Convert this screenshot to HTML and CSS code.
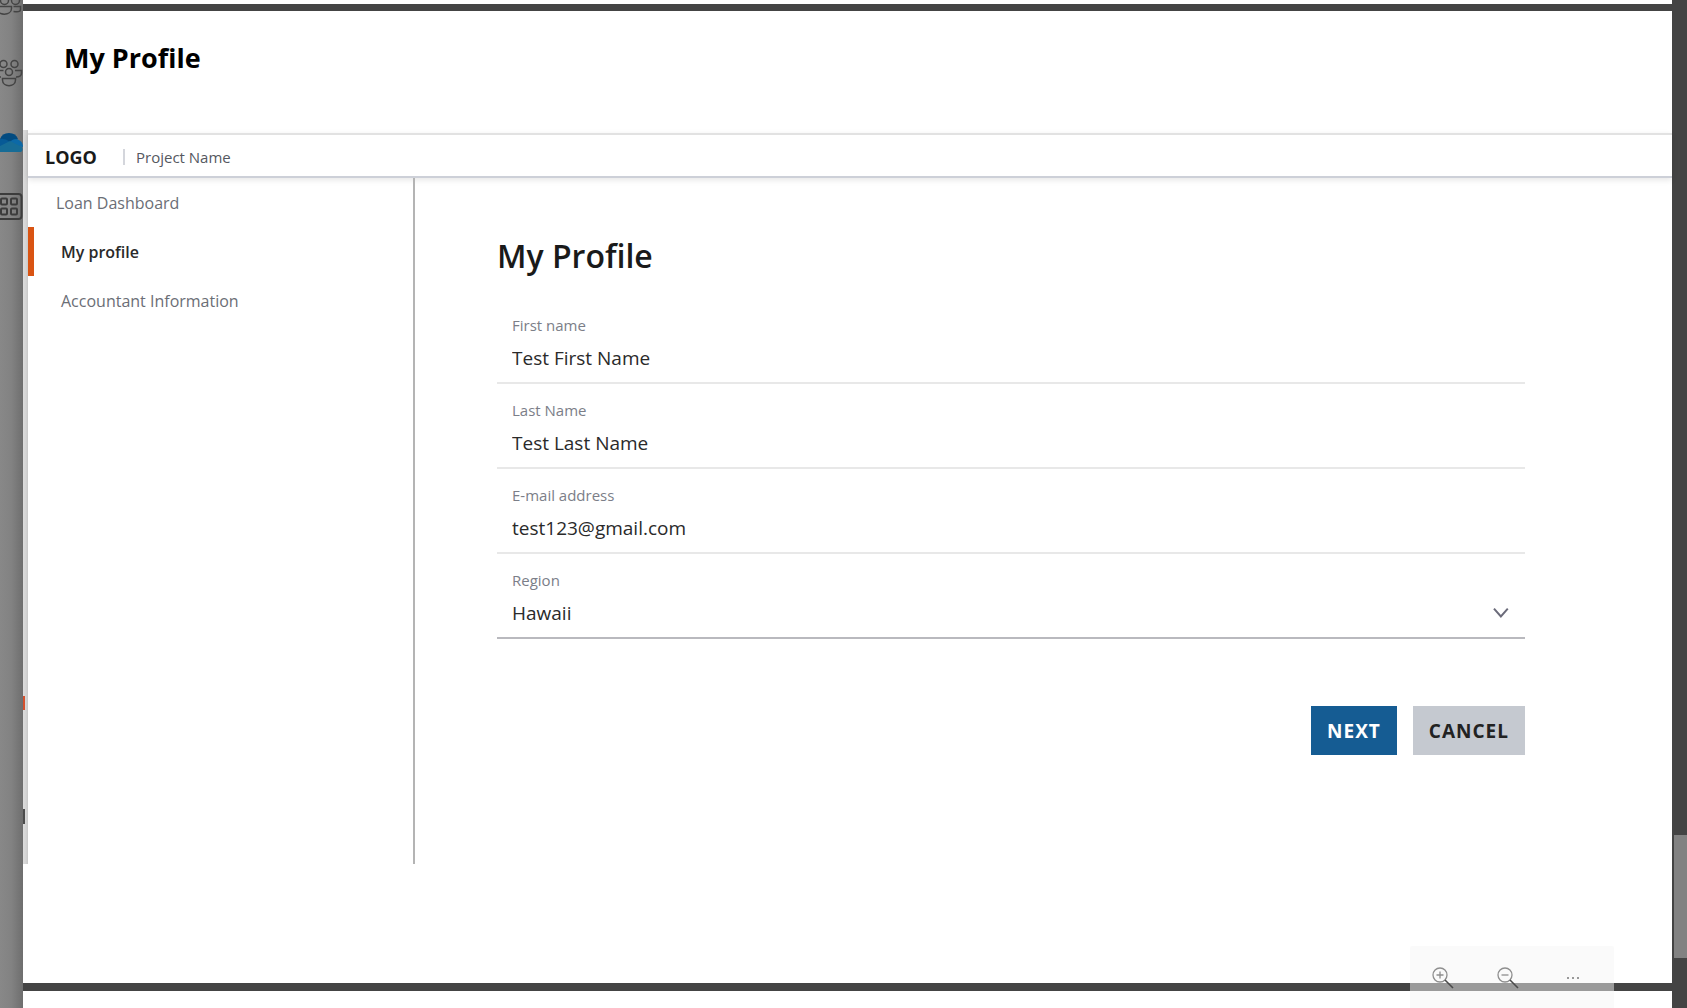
FILE: index.html
```html
<!DOCTYPE html>
<html lang="en">
<head>
<meta charset="utf-8">
<title>My Profile</title>
<link rel="stylesheet" href="styles.css">
</head>
<body>
<div class="app">
  <nav class="rail" aria-label="Apps">
    <ul class="rail-list">
      <li><a href="#" aria-label="Communities"><svg class="rail-icon" viewBox="0 0 23 40"><g class="people"><circle cx="4.500" cy="12.500" r="4"/><circle cx="15.500" cy="12.500" r="4"/><path d="M-3 18.500H11.500V20.500C11.500 28-3 28-3 20.500ZM13.500 18.500H20.500V21.500C20.500 24 17.500 24 13.500 23.500"/></g></svg></a></li>
      <li><a href="#" aria-label="People"><svg class="rail-icon" viewBox="0 0 23 40"><g class="people"><circle cx="3.500" cy="10" r="3.500"/><circle cx="14.500" cy="10" r="3.500"/><circle cx="9" cy="18" r="3.500"/><path d="M2.500 24.500H15.500V26C15.500 33.500 2.500 33.500 2.500 26ZM15 16.500H21.500V19C21.500 22 19 23 16 23M0 16.500H3.500M0 23H1"/></g></svg></a></li>
      <li><a href="#" aria-label="Cloud storage"><svg class="rail-icon" viewBox="0 0 23 40"><path fill="#034b80" d="M0 19Q2 13 9 13T18 19L9 24 0 26Z"/><path fill="#075a96" d="M0 19Q5 18 10 22L0 29Z"/><path fill="#0c69a7" d="M9 23Q14 17 19 20Q23 22 23 27L16 26Z"/><path fill="#176c96" d="M0 26L10 21 22 27Q24 32 19 32H0Z"/></svg></a></li>
      <li><a href="#" aria-label="All apps"><svg class="rail-icon" viewBox="0 0 23 40"><g class="tiles"><rect x="-5" y="8" width="26.500" height="25" rx="3"/><rect x="1" y="12.500" width="6" height="6" rx="1"/><rect x="11" y="12.500" width="6" height="6" rx="1"/><rect x="1" y="22.500" width="6" height="6" rx="1"/><rect x="11" y="22.500" width="6" height="6" rx="1"/></g></svg></a></li>
    </ul>
  </nav>

  <div class="viewer">
    <div class="sheet sheet-previous"></div>
    <article class="sheet sheet-current">
      <h1 class="sheet-title">My Profile</h1>
      <div class="mockup">
        <div class="mockup-edge"><i class="mark mark-red"></i><i class="mark mark-gray"></i></div>
        <div class="screen">
          <header class="topbar">
            <strong class="logo">LOGO</strong>
            <span class="project">Project Name</span>
          </header>
          <div class="columns">
            <nav class="menu" aria-label="Profile">
              <a class="menu-link menu-top" href="#">Loan Dashboard</a>
              <a class="menu-link menu-active" href="#" aria-current="page">My profile</a>
              <a class="menu-link" href="#">Accountant Information</a>
            </nav>
            <main class="content">
              <h2 class="heading">My Profile</h2>
              <form>
                <div class="field">
                  <label for="first">First name</label>
                  <input id="first" type="text" value="Test First Name">
                </div>
                <div class="field">
                  <label for="last">Last Name</label>
                  <input id="last" type="text" value="Test Last Name">
                </div>
                <div class="field">
                  <label for="email">E-mail address</label>
                  <input id="email" type="email" value="test123@gmail.com">
                </div>
                <div class="field field-select">
                  <label for="region">Region</label>
                  <div class="select-row">
                    <select id="region"><option>Hawaii</option></select>
                    <svg class="chevron" viewBox="0 0 16 12"><path d="M1 1.500L8 9.500 15 1.500"/></svg>
                  </div>
                </div>
                <div class="actions">
                  <button class="button button-primary" type="button">NEXT</button>
                  <button class="button" type="button">CANCEL</button>
                </div>
              </form>
            </main>
          </div>
        </div>
      </div>
    </article>
    <div class="sheet sheet-next"></div>
    <div class="zoom-bar">
      <button type="button" aria-label="Zoom in"><svg viewBox="0 0 24 24"><circle cx="9" cy="9" r="7"/><path d="M5.500 9H12.500M9 5.500V12.500"/><path class="handle" d="M14 14L22 22"/></svg></button>
      <button type="button" aria-label="Zoom out"><svg viewBox="0 0 24 24"><circle cx="9" cy="9" r="7"/><path d="M5.500 9H12.500"/><path class="handle" d="M14 14L22 22"/></svg></button>
      <button type="button" aria-label="More"><svg viewBox="0 0 24 24"><g class="dots"><rect x="6" y="11" width="2" height="2"/><rect x="11" y="11" width="2" height="2"/><rect x="16" y="11" width="2" height="2"/></g></svg></button>
    </div>
  </div>

  <div class="scrollbar"><div class="thumb"></div></div>
</div>
</body>
</html>
```
FILE: styles.css
```css
* { box-sizing: border-box; }

body {
  margin: 0;
  font-family: "Open Sans", "Noto Sans", sans-serif;
  color: #222;
}

.app {
  display: grid;
  grid-template-columns: 23px 1fr 15px;
  min-height: 100vh;
  background: #444;
}

.rail {
  overflow: hidden;
  background: linear-gradient(90deg, #888 0%, #828282 50%, #6e6e6e 100%);
}
.rail-list {
  margin: -25px 0 0;
  padding: 0;
  list-style: none;
}
.rail-list a {
  display: flex;
  align-items: center;
  height: 66px;
}
.rail-icon { width: 23px; height: 40px; }
.people { fill: none; stroke: #444; stroke-width: 1.5; }
.tiles { fill: none; stroke: #3c3c3c; stroke-width: 2; }

/* Document viewer */
.viewer {
  position: relative;
  display: flex;
  flex-direction: column;
  min-width: 0;
}
.sheet { background: #fff; }
.sheet-previous { height: 4px; margin-bottom: 7px; }
.sheet-current { flex: 1; }
.sheet-next { height: 17px; margin-top: 8px; }
.sheet-title {
  margin: 0;
  padding: 31px 41px 56px;
  font-size: 27px;
  line-height: 32px;
  font-weight: 700;
  color: #000;
}

.mockup {
  display: grid;
  grid-template-columns: 5px 1fr;
}
.mockup-edge {
  display: flex;
  flex-direction: column;
  background: linear-gradient(90deg, #dcdcdc, #d4d4d4 60%, #c8c8c8);
}
.mark { width: 2px; }
.mark-red { height: 14px; margin-top: 566px; background: #d4502e; }
.mark-gray { height: 15px; margin-top: 99px; background: #4c4c4c; }

.screen {
  display: flex;
  flex-direction: column;
  min-height: 734px;
  padding-top: 3px;
}
.topbar {
  display: flex;
  align-items: center;
  height: 45px;
  padding: 2px 17px 0;
  border-top: 2px solid #e2e2e2;
  border-bottom: 2px solid #cdd0d8;
  box-shadow: 0 2px 6px #0000001a;
}
.logo {
  width: 80px;
  border-right: 2px solid #d4d6dc;
  font-size: 18px;
  line-height: 16px;
  font-weight: 700;
  color: #1a1a1a;
}
.project {
  padding-left: 11px;
  font-size: 15px;
  color: #55585f;
}

.columns {
  display: grid;
  grid-template-columns: 387px 1fr;
  flex: 1;
}
.menu { border-right: 2px solid #b4b4b4; }
.menu-link {
  display: flex;
  align-items: center;
  height: 49px;
  padding-left: 33px;
  font-size: 16px;
  color: #6b6e76;
  text-decoration: none;
}
.menu-top { padding-left: 28px; }
.menu-active {
  padding-left: 27px;
  border-left: 6px solid #d95413;
  font-weight: 600;
  color: #2a2a2a;
}

.content { padding: 56px 147px 0 82px; }
.heading {
  margin: 0 0 21px;
  font-size: 32px;
  line-height: 44px;
  font-weight: 600;
  color: #1a1a1a;
}
.field {
  display: flex;
  flex-direction: column;
  height: 85px;
  padding: 16px 16px 0 15px;
  border-bottom: 2px solid #e8e8e8;
}
.field-select { border-bottom-color: #b9b9be; }
.field label {
  font-size: 15px;
  line-height: 20px;
  color: #7b7e88;
}
.field input,
.field select {
  appearance: none;
  width: 100%;
  height: 28px;
  margin: 9px 0 0;
  padding: 0;
  border: 0;
  background: none;
  font: 400 19px/28px "Open Sans", "Noto Sans", sans-serif;
  color: #2a2a2a;
}
.select-row { display: flex; align-items: center; }
.chevron {
  width: 16px;
  height: 12px;
  margin-top: 8px;
  fill: none;
  stroke: #6b6b7a;
  stroke-width: 2;
}

.actions {
  display: flex;
  justify-content: flex-end;
  gap: 16px;
  margin-top: 67px;
}
.button {
  height: 49px;
  padding: 0 16px;
  border: 0;
  background: #c5c9d0;
  font: 700 19px/24px "Open Sans", "Noto Sans", sans-serif;
  letter-spacing: 1px;
  color: #222;
}
.button-primary { background: #155c93; color: #fff; }

/* Floating zoom controls */
.zoom-bar {
  position: absolute;
  right: 58px;
  bottom: 0;
  display: flex;
  width: 204px;
  height: 62px;
  padding: 5px 9px 0 0;
  border-radius: 2px 2px 0 0;
  background: #f5f5f57d;
}
.zoom-bar button {
  flex: 1;
  padding: 0;
  border: 0;
  background: none;
}
.zoom-bar svg {
  width: 24px;
  height: 24px;
  fill: none;
  stroke: #8e8e8e;
  stroke-width: 1.3;
}
.zoom-bar .handle { stroke: #4a4a4a; stroke-width: 1.6; }
.zoom-bar .dots { fill: #999; stroke: none; }

.scrollbar { padding: 835px 0 0 2px; }
.thumb { height: 123px; background: #828282; }
```
